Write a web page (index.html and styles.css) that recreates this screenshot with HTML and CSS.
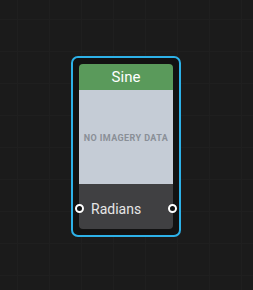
FILE: index.html
```html
<!DOCTYPE html>
<html>
<head>
    <title>Node Graph</title>
    <link rel="stylesheet" href="styles.css">
</head>
<body>
    <div class="canvas">
        <div class="node selected">
            <div class="node-card">
                <div class="node-title">Sine</div>
                <div class="node-preview">NO IMAGERY DATA</div>
                <div class="node-ports">
                    <span class="pin pin-in"></span>
                    <span class="port-label">Radians</span>
                    <span class="pin pin-out"></span>
                </div>
            </div>
        </div>
    </div>
</body>
</html>
```

FILE: styles.css
```css
html, body {
    margin: 0;
    padding: 0;
    width: 100%;
    height: 100%;
    background: #1b1b1b;
    font-family: Roboto, "Liberation Sans", sans-serif;
}
.canvas {
    position: relative;
    width: 253px;
    height: 290px;
    overflow: hidden;
    background-color: #1b1b1b;
    background-image:
        linear-gradient(to right, #1f1f1f 1px, transparent 1px),
        linear-gradient(to bottom, #1f1f1f 1px, transparent 1px);
    background-size: 32px 32px;
    background-position: 17px 19px;
}
.node {
    position: absolute;
    left: 71px;
    top: 56px;
    width: 94px;
    padding: 6px;
    background: #121212;
    border: 2px solid #2db1e8;
    border-radius: 7px;
}
.node-card {
    position: relative;
    border-radius: 4px;
}
.node-title {
    height: 26px;
    line-height: 26px;
    text-align: center;
    color: #ffffff;
    font-size: 15px;
    background: #5a9a5b;
    border-radius: 4px 4px 0 0;
}
.node-preview {
    height: 94px;
    display: flex;
    align-items: center;
    justify-content: center;
    background: #c5ccd6;
    color: #8a8f97;
    font-size: 9px;
    font-weight: bold;
    letter-spacing: 0.4px;
    padding-top: 2px;
    box-sizing: border-box;
    white-space: nowrap;
}
.node-ports {
    position: relative;
    height: 45px;
    display: flex;
    align-items: center;
    background: #404042;
    border-radius: 0 0 4px 4px;
    box-sizing: border-box;
    padding-top: 5px;
}
.port-label {
    color: #e6e6e6;
    font-size: 14px;
    margin-left: 12px;
}
.pin {
    position: absolute;
    top: 20px;
    width: 5px;
    height: 5px;
    border: 2px solid #ffffff;
    border-radius: 50%;
    background: #111111;
}
.pin-in {
    left: -4px;
}
.pin-out {
    right: -4px;
}
```
